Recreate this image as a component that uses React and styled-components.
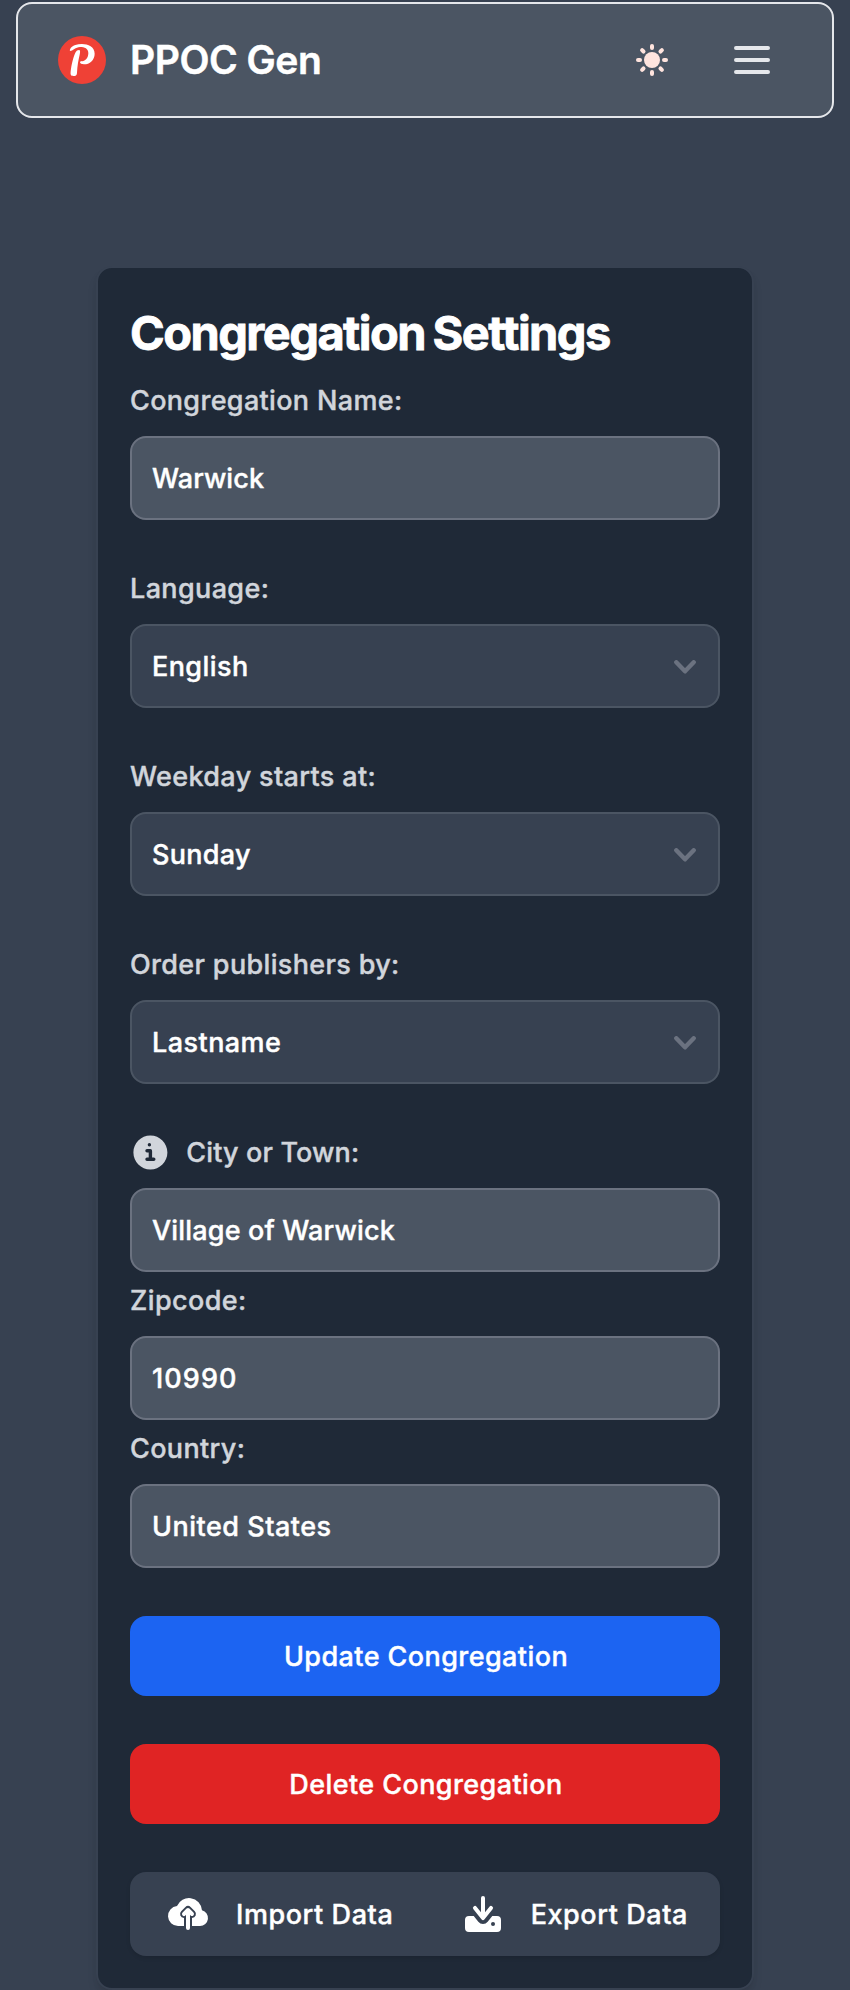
import React from 'react';
import styled, { createGlobalStyle } from 'styled-components';

const GlobalStyle = createGlobalStyle`
  *, *::before, *::after { box-sizing: border-box; }
  html { background: #374151; }
  body {
    margin: 0;
    color: #fff;
    background: #374151;
    font-family: Inter, "Liberation Sans", sans-serif;
    font-size: 27px;
    font-weight: 500;
    line-height: 40px;
    -webkit-text-stroke: 0.4px currentColor;
  }
  button, input { font: inherit; color: inherit; margin: 0; }
`;

const Page = styled.div`
  display: flex;
  flex-direction: column;
  align-items: center;
  padding: 2px 16px 0;
  height: 1990px;
`;

const Navbar = styled.header`
  display: flex;
  align-items: center;
  width: 100%;
  height: 116px;
  padding: 0 40px;
  background: #4b5563;
  border: 2px solid #e5e7eb;
  border-radius: 16px;
`;

const Brand = styled.div`
  display: flex;
  align-items: center;
  gap: 24px;
  flex: 1;
`;

const BrandName = styled.span`
  font-size: 39px;
  font-weight: 600;
  letter-spacing: -0.45px;
  -webkit-text-stroke: 0.5px #fff;
`;

const NavActions = styled.div`
  display: flex;
  align-items: center;
  gap: 20px;
`;

const IconButton = styled.button`
  display: flex;
  align-items: center;
  justify-content: center;
  width: 80px;
  height: 80px;
  padding: 0;
  background: none;
  border: 0;
`;

const Card = styled.main`
  display: flex;
  flex-direction: column;
  width: 658px;
  margin-top: 148px;
  padding: 32px;
  background: #1f2937;
  border: 2px solid #374151;
  border-radius: 16px;
  box-shadow: 0 8px 12px -2px rgba(0, 0, 0, 0.1), 0 4px 8px -4px rgba(0, 0, 0, 0.1);
`;

const Title = styled.h1`
  margin: 0 0 15px;
  padding-top: 1px;
  font-size: 47px;
  font-weight: 700;
  line-height: 64px;
  letter-spacing: -1.55px;
  word-spacing: -2px;
  white-space: nowrap;
  -webkit-text-stroke: 0.8px #fff;
`;

const Field = styled.div`
  display: flex;
  flex-direction: column;
  gap: 16px;
  margin-bottom: ${(p) => (p.$tight ? 8 : 48)}px;
`;

const Label = styled.label`
  display: flex;
  align-items: center;
  gap: 16px;
  height: 40px;
  color: #d1d5db;
  letter-spacing: ${(p) => p.$track}px;
`;

const Caption = styled.span`
  padding-top: 2px;
`;

const TextInput = styled.input`
  width: 100%;
  height: 84px;
  padding: 0 20px;
  background: #4b5563;
  border: 2px solid #6b7280;
  border-radius: 16px;
  outline: none;
  letter-spacing: ${(p) => p.$track}px;
  -webkit-text-stroke: 0.4px #fff;
`;

const SelectBox = styled.button`
  display: flex;
  align-items: center;
  justify-content: space-between;
  width: 100%;
  height: 84px;
  padding: 2px 22px 0 20px;
  background: #374151;
  border: 2px solid #4b5563;
  border-radius: 16px;
  letter-spacing: ${(p) => p.$track}px;
`;

const ActionButton = styled.button`
  height: 80px;
  margin-bottom: 48px;
  padding: 2px 0 0 2px;
  border: 0;
  border-radius: 16px;
  background: ${(p) => (p.$danger ? '#e02424' : '#1c64f2')};
  letter-spacing: 0.42px;
`;

const ButtonGroup = styled.div`
  display: flex;
  height: 84px;
  padding: 0 32px 0 34px;
  justify-content: space-between;
  background: #374151;
  border-radius: 16px;
  box-shadow: 0 2px 4px rgba(0, 0, 0, 0.1);
`;

const GroupButton = styled.button`
  display: flex;
  align-items: center;
  gap: 24px;
  padding: 0;
  background: none;
  border: 0;
  letter-spacing: 0.57px;
  white-space: nowrap;
`;

const Svg = styled.svg`
  display: block;
  flex: none;
`;

const InfoSvg = styled(Svg)`
  margin-left: -0.5px;
`;

const Logo = () => (
  <Svg width="48" height="48" viewBox="12 12 144 144">
    <circle cx="84" cy="84" r="72" fill="#ef4136" />
    <g fill="#fff">
      <path d="M48 57C46 52 52 43 64 39C85 32 122 36 122 65C122 84 107 97 90 97C83 97 78 95 78 91C78 87 84 88 88 87C98 84 103 74 103 63C103 50 92 45 78 45C65 45 56 57 48 57Z" />
      <path d="M75 54C79 54 79 60 77 68C73 85 70 100 69 122C69 129 66 132 58 132C50 132 49 128 50 118C52 98 58 75 64 62C67 56 71 54 75 54Z" />
    </g>
  </Svg>
);

const SunIcon = () => (
  <Svg width="40" height="40" viewBox="-20 -20 40 40" fill="#ffe4de">
    <circle r="8" />
    {[0, 45, 90, 135, 180, 225, 270, 315].map((a) => (
      <rect key={a} x="-2" y="-16" width="4" height="6" rx="2" transform={`rotate(${a})`} />
    ))}
  </Svg>
);

const MenuIcon = () => (
  <Svg width="36" height="28" viewBox="0 0 36 28" stroke="#e5e7eb" strokeWidth="4" strokeLinecap="round">
    <path d="M2 2h32M2 14h32M2 26h32" />
  </Svg>
);

const ChevronIcon = () => (
  <Svg width="22" height="14" viewBox="0 0 22 14" fill="none" stroke="#6b7280" strokeWidth="4.4" strokeLinecap="round" strokeLinejoin="round">
    <path d="M2.3 2.3 11 11.3l8.7-9" />
  </Svg>
);

const InfoIcon = () => (
  <InfoSvg width="40.8" height="40.8" viewBox="0 0 24 24" fill="currentColor">
    <path fillRule="evenodd" clipRule="evenodd" d="M2 12C2 6.477 6.477 2 12 2s10 4.477 10 10-4.477 10-10 10S2 17.523 2 12Zm9.408-5.5a1 1 0 1 0 0 2h.01a1 1 0 1 0 0-2h-.01ZM10 10a1 1 0 1 0 0 2h1v3h-1a1 1 0 1 0 0 2h4a1 1 0 1 0 0-2h-1v-4a1 1 0 0 0-1-1h-2Z" />
  </InfoSvg>
);

const CloudUploadIcon = () => (
  <Svg width="48" height="48" viewBox="0 0 24 24" fill="currentColor">
    <path fillRule="evenodd" clipRule="evenodd" d="M13.383 4.076a6.5 6.5 0 0 0-6.887 3.95A5 5 0 0 0 7 18h3v-4a2 2 0 0 1-1.414-3.414l2-2a2 2 0 0 1 2.828 0l2 2A2 2 0 0 1 14 14v4h4a4 4 0 0 0 .988-7.876 6.5 6.5 0 0 0-5.605-6.048Z" />
    <path fillRule="evenodd" clipRule="evenodd" d="M12.707 9.293a1 1 0 0 0-1.414 0l-2 2a1 1 0 1 0 1.414 1.414l.293-.293V19a1 1 0 1 0 2 0v-6.586l.293.293a1 1 0 0 0 1.414-1.414l-2-2Z" />
  </Svg>
);

const DownloadIcon = () => (
  <Svg width="48" height="48" viewBox="0 0 24 24" fill="currentColor">
    <path fillRule="evenodd" clipRule="evenodd" d="M13 11.15V4a1 1 0 1 0-2 0v7.15L8.78 8.374a1 1 0 1 0-1.56 1.25l4 5a1 1 0 0 0 1.56 0l4-5a1 1 0 1 0-1.56-1.25L13 11.15Z" />
    <path fillRule="evenodd" clipRule="evenodd" d="M9.657 15.874 7.358 13H5a2 2 0 0 0-2 2v4a2 2 0 0 0 2 2h14a2 2 0 0 0 2-2v-4a2 2 0 0 0-2-2h-2.358l-2.3 2.874a3 3 0 0 1-4.685 0ZM17 16a1 1 0 1 0 0 2h.01a1 1 0 1 0 0-2H17Z" />
  </Svg>
);

const FIELDS = [
  { label: 'Congregation Name:', track: 0.33, value: 'Warwick', valueTrack: 0.08 },
  { label: 'Language:', track: 0.37, value: 'English', valueTrack: 0.42, select: true },
  { label: 'Weekday starts at:', track: 0.35, value: 'Sunday', valueTrack: 0.3, select: true },
  { label: 'Order publishers by:', track: 0.34, value: 'Lastname', valueTrack: 0.45, select: true },
  { label: 'City or Town:', track: 0.14, value: 'Village of Warwick', valueTrack: 0.17, info: true, tight: true },
  { label: 'Zipcode:', track: 0.4, value: '10990', valueTrack: 1.1, tight: true },
  { label: 'Country:', track: 0.35, value: 'United States', valueTrack: 0.5 },
];

export default function App() {
  return (
    <>
      <GlobalStyle />
      <Page>
        <Navbar>
          <Brand>
            <Logo />
            <BrandName>PPOC Gen</BrandName>
          </Brand>
          <NavActions>
            <IconButton aria-label="Toggle theme"><SunIcon /></IconButton>
            <IconButton aria-label="Open menu"><MenuIcon /></IconButton>
          </NavActions>
        </Navbar>
        <Card>
          <Title>Congregation Settings</Title>
          {FIELDS.map((f) => (
            <Field key={f.label} $tight={f.tight}>
              <Label $track={f.track}>
                {f.info && <InfoIcon />}
                <Caption>{f.label}</Caption>
              </Label>
              {f.select ? (
                <SelectBox type="button" $track={f.valueTrack}>
                  {f.value}
                  <ChevronIcon />
                </SelectBox>
              ) : (
                <TextInput defaultValue={f.value} $track={f.valueTrack} />
              )}
            </Field>
          ))}
          <ActionButton>Update Congregation</ActionButton>
          <ActionButton $danger>Delete Congregation</ActionButton>
          <ButtonGroup>
            <GroupButton><CloudUploadIcon /><Caption>Import Data</Caption></GroupButton>
            <GroupButton><DownloadIcon /><Caption>Export Data</Caption></GroupButton>
          </ButtonGroup>
        </Card>
      </Page>
    </>
  );
}
